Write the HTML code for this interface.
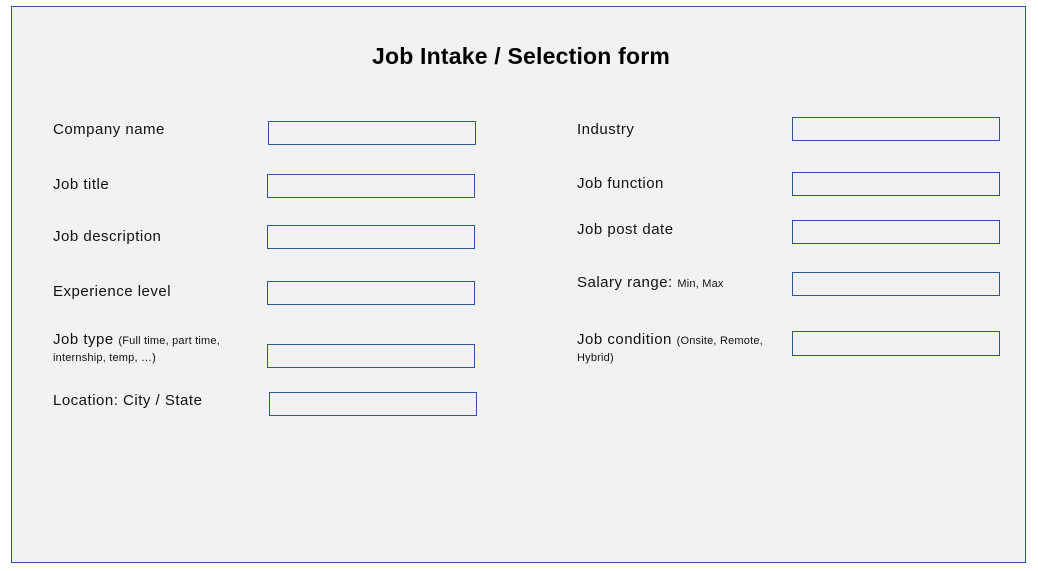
<!DOCTYPE html>
<html><head><meta charset="utf-8"><style>
html,body{margin:0;padding:0;background:#fff;width:1038px;height:571px;overflow:hidden;font-family:"Liberation Sans",Arial,sans-serif;color:#111}
.frame{position:absolute;left:11px;top:6px;width:1013px;height:555px;border:1px solid #2f55a0;background:#f2f2f2}
.t{position:absolute;font-size:15px;line-height:17px;white-space:nowrap;letter-spacing:0.5px}
.s{font-size:11px;letter-spacing:0.2px}
.b{position:absolute;width:206px;height:22px;border:1px solid #2f55a0;background:#f2f2f2}
h1{position:absolute;left:0;width:1042px;top:43px;margin:0;text-align:center;font-size:23px;font-weight:bold;color:#000;letter-spacing:0.2px}
</style></head><body>
<div class="frame"></div>
<h1>Job Intake / Selection form</h1>
<div class="t" style="left:53px;top:121px">Company name</div>
<div class="t" style="left:53px;top:176px">Job title</div>
<div class="t" style="left:53px;top:228px">Job description</div>
<div class="t" style="left:53px;top:283px">Experience level</div>
<div class="t" style="left:53px;top:332px;line-height:16px">Job type <span class="s">(Full time, part time,</span><br><span class="s">internship, temp, …)</span></div>
<div class="t" style="left:53px;top:392px">Location: City / State</div>
<div class="b" style="left:268px;top:121px"></div>
<div class="b" style="left:267px;top:174px"></div>
<div class="b" style="left:267px;top:225px"></div>
<div class="b" style="left:267px;top:281px"></div>
<div class="b" style="left:267px;top:344px"></div>
<div class="b" style="left:269px;top:392px"></div>
<div class="t" style="left:577px;top:121px">Industry</div>
<div class="t" style="left:577px;top:175px">Job function</div>
<div class="t" style="left:577px;top:221px">Job post date</div>
<div class="t" style="left:577px;top:274px">Salary range: <span class="s">Min, Max</span></div>
<div class="t" style="left:577px;top:332px;line-height:16px">Job condition <span class="s">(Onsite, Remote,</span><br><span class="s">Hybrid)</span></div>
<div class="b" style="left:792px;top:117px"></div>
<div class="b" style="left:792px;top:172px"></div>
<div class="b" style="left:792px;top:220px"></div>
<div class="b" style="left:792px;top:272px"></div>
<div class="b" style="left:792px;top:331px;height:23px"></div>
</body></html>
